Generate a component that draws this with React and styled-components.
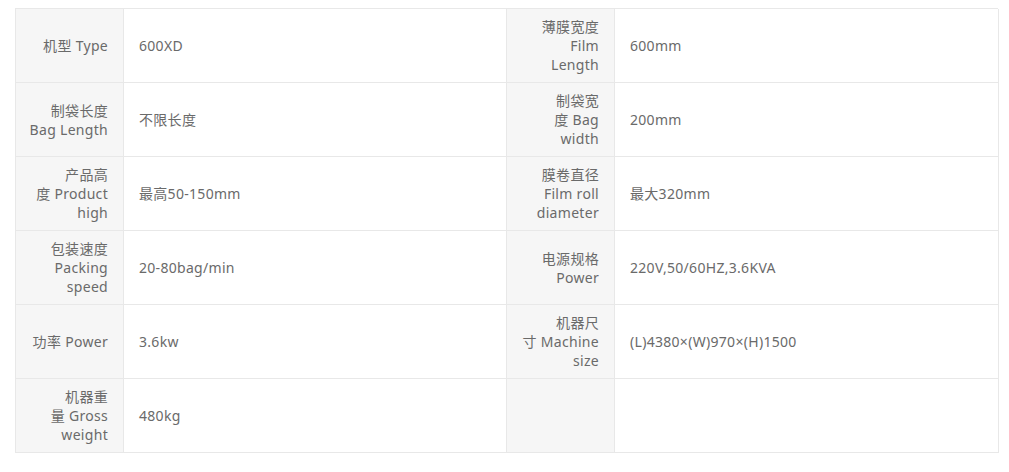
import React from "react";
import styled, { createGlobalStyle } from "styled-components";

const GlobalStyle = createGlobalStyle`
  body {
    margin: 0;
    background: #fff;
    font-family: "Noto Sans", "Noto Sans CJK SC", sans-serif;
  }
`;

const specs = [
  [["机型 Type"], "600XD", ["薄膜宽度", "Film", "Length"], "600mm"],
  [["制袋长度", "Bag Length"], "不限长度", ["制袋宽", "度 Bag", "width"], "200mm"],
  [["产品高", "度 Product", "high"], "最高50-150mm", ["膜卷直径", "Film roll", "diameter"], "最大320mm"],
  [["包装速度", "Packing", "speed"], "20-80bag/min", ["电源规格", "Power"], "220V,50/60HZ,3.6KVA"],
  [["功率 Power"], "3.6kw", ["机器尺", "寸 Machine", "size"], "(L)4380×(W)970×(H)1500"],
  [["机器重", "量 Gross", "weight"], "480kg", [], ""],
];

const Page = styled.div`
  padding: 8px 11px 20px 15px;
`;

const SpecGrid = styled.div`
  display: grid;
  grid-template-columns: 108px 383px 108px 384px;
  grid-auto-rows: 74px;
  border-top: 1px solid #e8e8e8;
  border-left: 1px solid #e8e8e8;
  color: #6a6a6a;
  font-size: 14px;
  line-height: 19px;
  letter-spacing: 0.3px;
`;

const Cell = styled.div`
  box-sizing: border-box;
  display: flex;
  flex-direction: column;
  justify-content: center;
  border-right: 1px solid #e8e8e8;
  border-bottom: 1px solid #e8e8e8;
  padding: 0 15px;
  background: ${(p) => (p.$label ? "#f6f6f6" : "#fff")};
  align-items: ${(p) => (p.$label ? "flex-end" : "flex-start")};
  text-align: ${(p) => (p.$label ? "right" : "left")};
`;

const Line = styled.span`
  white-space: nowrap;
`;

const Label = ({ lines }) => (
  <Cell $label>
    {lines.map((l) => (
      <Line key={l}>{l}</Line>
    ))}
  </Cell>
);

export default function App() {
  return (
    <Page>
      <GlobalStyle />
      <SpecGrid>
        {specs.map(([l1, v1, l2, v2], i) => (
          <React.Fragment key={i}>
            <Label lines={l1} />
            <Cell>{v1}</Cell>
            <Label lines={l2} />
            <Cell>{v2}</Cell>
          </React.Fragment>
        ))}
      </SpecGrid>
    </Page>
  );
}
